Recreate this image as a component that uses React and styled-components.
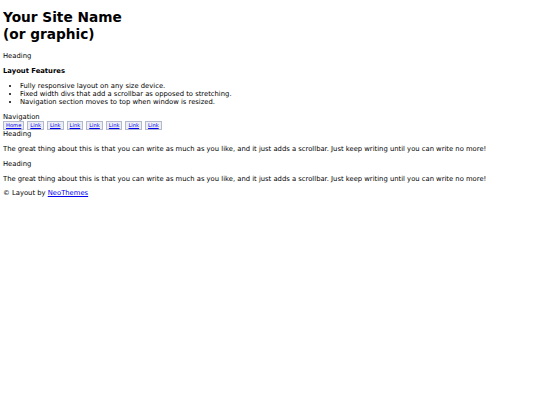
import styled, { createGlobalStyle } from "styled-components";

const GlobalStyle = createGlobalStyle`
  body {
    margin: 3px;
    font-family: "DejaVu Sans", Verdana, sans-serif;
    font-size: 6.8px;
    line-height: 8px;
    color: #000;
    background: #fff;
  }
`;

const links = ["Home", "Link", "Link", "Link", "Link", "Link", "Link", "Link"];

function App() {
  return (
    <>
      <GlobalStyle />
      <Page>
        <Header>
          <SiteName>Your Site Name<br />(or graphic)</SiteName>
        </Header>
        <Side>
          <Para>Heading</Para>
          <SubTitle>Layout Features</SubTitle>
          <Features>
            <li>Fully responsive layout on any size device.</li>
            <li>Fixed width divs that add a scrollbar as opposed to stretching.</li>
            <li>Navigation section moves to top when window is resized.</li>
          </Features>
        </Side>
        <Nav>
          <NavTitle>Navigation</NavTitle>
          <NavList>
            {links.map((l, i) => (
              <NavItem key={i}><a href="#">{l}</a></NavItem>
            ))}
          </NavList>
        </Nav>
        <Main>
          <NavTitle>Heading</NavTitle>
          <Para>The great thing about this is that you can write as much as you like, and it just adds a scrollbar. Just keep writing until you can write no more!</Para>
          <Para>Heading</Para>
          <Para $last>The great thing about this is that you can write as much as you like, and it just adds a scrollbar. Just keep writing until you can write no more!</Para>
        </Main>
        <Footer>
          &copy; Layout by <FooterLink href="#">NeoThemes</FooterLink>
        </Footer>
      </Page>
    </>
  );
}

export default App;

const Page = styled.div`
  display: flex;
  flex-direction: column;
`;

const Header = styled.div``;

const SiteName = styled.h1`
  font-size: 13.7px;
  line-height: 17px;
  margin: 6px 0 2px;
  font-weight: bold;
`;

const Side = styled.div``;

const Para = styled.p`
  margin: 7px 0 ${(p) => (p.$last ? "6px" : "7px")};
`;

const SubTitle = styled.p`
  font-weight: bold;
  margin: 7px 0;
`;

const Features = styled.ul`
  margin: 7px 0;
  padding-left: 17px;
`;

const Nav = styled.div``;

const NavTitle = styled.div``;

const NavList = styled.ul`
  list-style: none;
  margin: 0;
  padding: 0;
  display: flex;
  gap: 3px;
`;

const NavItem = styled.li`
  border: 1px solid #b4b8cc;
  background: #eceef2;
  padding: 0 2px;
  font-size: 5.2px;
  line-height: 7px;
  a {
    color: #00e;
  }
`;

const Main = styled.div``;

const Footer = styled.div``;

const FooterLink = styled.a`
  color: #00e;
`;
